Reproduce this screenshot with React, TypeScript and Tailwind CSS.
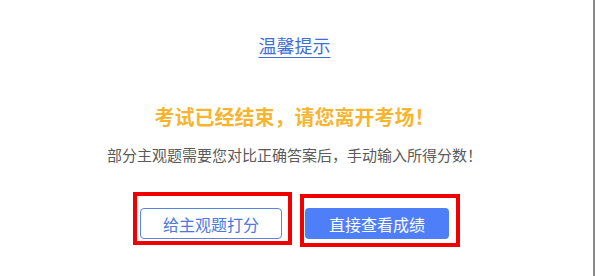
import React from "react";

export default function App() {
  const font = { fontFamily: '"Noto Sans CJK SC", "Noto Sans", sans-serif' };
  return (
    <div className="w-[595px] h-[276px] bg-white border-r-2 border-[#8a8a8a] overflow-hidden" style={font}>
      <div className="flex flex-col items-center pr-[4px]">
        <div className="pt-[33px] text-[18px] leading-[24px] text-[#3f6fd6] underline underline-offset-[4px] decoration-1">
          温馨提示
        </div>
        <div className="mt-[46px] text-[20px] leading-[28px] font-bold text-[#f7b52f]">
          考试已经结束，请您离开考场！
        </div>
        <div className="mt-[13px] text-[15px] leading-[22px] text-[#5a5a5a]">
          部分主观题需要您对比正确答案后，手动输入所得分数！
        </div>
        <div className="mt-[42px] flex gap-[23px]">
          <div className="relative">
            <button className="w-[142px] h-[31px] rounded-[4px] border border-[#5a83e6] bg-white text-[16px] text-[#4a78e0]">
              给主观题打分
            </button>
            <div className="absolute left-[-7px] right-[-10px] top-[-16px] bottom-[-6px] border-4 border-[#f00000] pointer-events-none" />
          </div>
          <div className="relative">
            <button className="w-[144px] h-[31px] rounded-[4px] bg-[#4e7ef8] text-[16px] text-white">
              直接查看成绩
            </button>
            <div className="absolute left-[-5px] right-[-11px] top-[-14px] bottom-[-8px] border-4 border-[#f00000] pointer-events-none" />
          </div>
        </div>
      </div>
    </div>
  );
}
